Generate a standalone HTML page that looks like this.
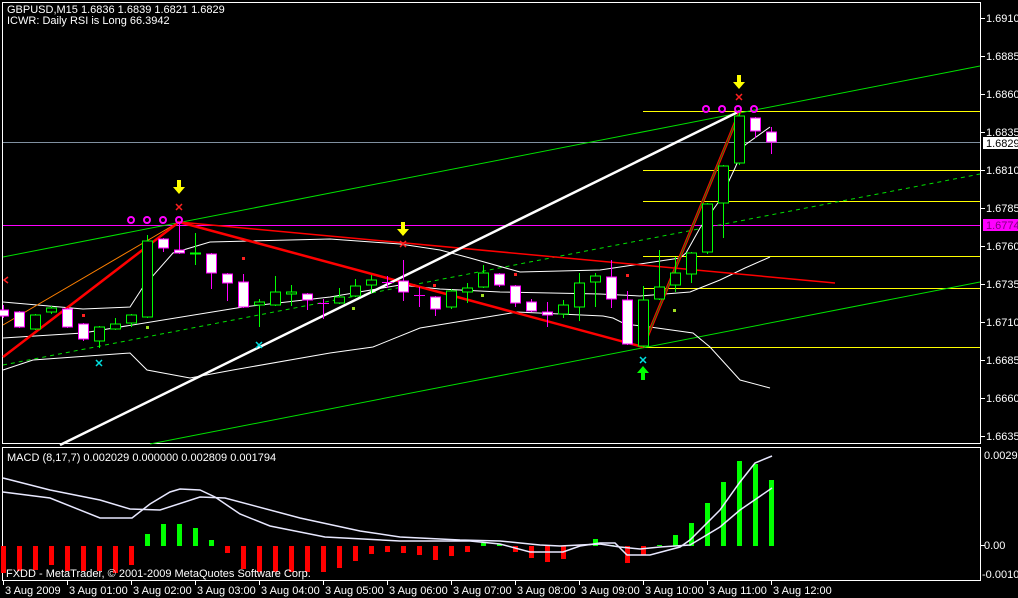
<!DOCTYPE html>
<html><head><meta charset="utf-8"><style>
html,body{margin:0;padding:0;background:#000;overflow:hidden}
svg{display:block}
text{font-family:"Liberation Sans",sans-serif;font-size:11px;fill:#fff}
</style></head><body>
<svg width="1018" height="598" viewBox="0 0 1018 598" xmlns="http://www.w3.org/2000/svg">
<rect width="1018" height="598" fill="#000"/>
<rect x="2.5" y="2.5" width="978" height="441" fill="none" stroke="#fff" stroke-width="1"/>
<rect x="2.5" y="447.5" width="978" height="133" fill="none" stroke="#fff" stroke-width="1"/>
<g stroke="#fff" stroke-width="1">
<line x1="981" y1="18.5" x2="985" y2="18.5"/><line x1="981" y1="56.5" x2="985" y2="56.5"/><line x1="981" y1="94.5" x2="985" y2="94.5"/><line x1="981" y1="132.5" x2="985" y2="132.5"/><line x1="981" y1="170.5" x2="985" y2="170.5"/><line x1="981" y1="208.5" x2="985" y2="208.5"/><line x1="981" y1="246.5" x2="985" y2="246.5"/><line x1="981" y1="284.5" x2="985" y2="284.5"/><line x1="981" y1="322.5" x2="985" y2="322.5"/><line x1="981" y1="360.5" x2="985" y2="360.5"/><line x1="981" y1="398.5" x2="985" y2="398.5"/><line x1="981" y1="436.5" x2="985" y2="436.5"/>
<line x1="981" y1="545.5" x2="985" y2="545.5"/>
<line x1="3.5" y1="581" x2="3.5" y2="585"/><line x1="67.5" y1="581" x2="67.5" y2="585"/><line x1="131.5" y1="581" x2="131.5" y2="585"/><line x1="195.5" y1="581" x2="195.5" y2="585"/><line x1="259.5" y1="581" x2="259.5" y2="585"/><line x1="323.5" y1="581" x2="323.5" y2="585"/><line x1="387.5" y1="581" x2="387.5" y2="585"/><line x1="451.5" y1="581" x2="451.5" y2="585"/><line x1="515.5" y1="581" x2="515.5" y2="585"/><line x1="579.5" y1="581" x2="579.5" y2="585"/><line x1="643.5" y1="581" x2="643.5" y2="585"/><line x1="707.5" y1="581" x2="707.5" y2="585"/><line x1="771.5" y1="581" x2="771.5" y2="585"/>
</g>
<g>
<text x="986" y="22">1.6910</text><text x="986" y="60">1.6885</text><text x="986" y="98">1.6860</text><text x="986" y="136">1.6835</text><text x="986" y="174">1.6810</text><text x="986" y="212">1.6785</text><text x="986" y="250">1.6760</text><text x="986" y="288">1.6735</text><text x="986" y="326">1.6710</text><text x="986" y="364">1.6685</text><text x="986" y="402">1.6660</text><text x="986" y="440">1.6635</text>
<text x="984" y="459">0.00299</text><text x="984" y="549">0.00</text><text x="982" y="578">-0.00107</text>
</g>
<rect x="983" y="137" width="35" height="12" fill="#fff"/><text x="986" y="147" style="fill:#000">1.6829</text>
<rect x="983" y="219" width="35" height="12" fill="#ff00ff"/><text x="986" y="229" style="fill:#800080">1.6774</text>
<g>
<text x="5" y="594">3 Aug 2009</text><text x="69" y="594">3 Aug 01:00</text><text x="133" y="594">3 Aug 02:00</text><text x="197" y="594">3 Aug 03:00</text><text x="261" y="594">3 Aug 04:00</text><text x="325" y="594">3 Aug 05:00</text><text x="389" y="594">3 Aug 06:00</text><text x="453" y="594">3 Aug 07:00</text><text x="517" y="594">3 Aug 08:00</text><text x="581" y="594">3 Aug 09:00</text><text x="645" y="594">3 Aug 10:00</text><text x="709" y="594">3 Aug 11:00</text><text x="773" y="594">3 Aug 12:00</text>
</g>
<line x1="3" y1="225.5" x2="980" y2="225.5" stroke="#ff00ff"/>
<line x1="3" y1="142.5" x2="980" y2="142.5" stroke="#8090a0"/>
<g stroke="#ffff00" stroke-width="1">
<line x1="643" y1="111.5" x2="980" y2="111.5"/><line x1="643" y1="170.5" x2="980" y2="170.5"/><line x1="643" y1="201.5" x2="980" y2="201.5"/><line x1="643" y1="256.5" x2="980" y2="256.5"/><line x1="643" y1="288.5" x2="980" y2="288.5"/><line x1="643" y1="347.5" x2="980" y2="347.5"/>
</g>
<line x1="3" y1="257" x2="980" y2="66" stroke="#00e000"/>
<line x1="150" y1="444" x2="980" y2="282" stroke="#00e000"/>
<line x1="3" y1="365" x2="980" y2="174" stroke="#00e000" stroke-dasharray="4,4"/>
<g fill="none" stroke="#fff" stroke-width="1">
<polyline points="3,302 83,309 130,307 143,287 173,253 210,242 330,239 400,244 440,250 470,258 520,272 600,270 640,264 680,258 686,253 700,228 720,200 735,168 745,145 770,127"/>
<polyline points="3,338 83,333 243,307 330,297 400,285 440,289 500,292 600,294 640,296 690,292 720,280 745,268 770,257"/>
<polyline points="3,370 33,360 130,353 147,370 190,378 233,370 330,353 373,347 420,328 487,317 517,312 603,316 613,318 625,324 650,327 693,333 710,347 740,380 770,388"/>
</g>
<line x1="3" y1="325" x2="179" y2="222" stroke="#ff8000"/>
<line x1="179" y1="222" x2="835" y2="283" stroke="#ff0000" stroke-width="1.5"/>
<polyline points="3,357 179,222 643,347" fill="none" stroke="#ff0000" stroke-width="2.5"/>
<line x1="60" y1="445" x2="740" y2="111" stroke="#fff" stroke-width="2.5"/>
<line x1="643" y1="347" x2="740" y2="111" stroke="#ff0000" stroke-width="3"/>
<line x1="643" y1="347" x2="740" y2="111" stroke="#008000" stroke-width="1"/>
<g stroke-width="1">
<g stroke="#ff00ff" fill="#fff">
<line x1="3.5" y1="305" x2="3.5" y2="318"/><rect x="-1.5" y="310" width="10" height="6"/>
<line x1="19.5" y1="311" x2="19.5" y2="328"/><rect x="14.5" y="312" width="10" height="15"/>
<line x1="67.5" y1="308" x2="67.5" y2="328"/><rect x="62.5" y="309" width="10" height="18"/>
<line x1="83.5" y1="323" x2="83.5" y2="341"/><rect x="78.5" y="324" width="10" height="15"/>
<line x1="163.5" y1="238" x2="163.5" y2="252"/><rect x="158.5" y="239" width="10" height="9"/>
<line x1="179.5" y1="222" x2="179.5" y2="254"/><rect x="174.5" y="250" width="10" height="3"/>
<line x1="211.5" y1="253" x2="211.5" y2="289"/><rect x="206.5" y="254" width="10" height="19"/>
<line x1="227.5" y1="273" x2="227.5" y2="301"/><rect x="222.5" y="274" width="10" height="9"/>
<line x1="243.5" y1="274" x2="243.5" y2="308"/><rect x="238.5" y="282" width="10" height="25"/>
<line x1="307.5" y1="293" x2="307.5" y2="310"/><rect x="302.5" y="294" width="10" height="6"/>
<line x1="323.5" y1="299" x2="323.5" y2="319"/><line x1="318" y1="303.5" x2="329" y2="303.5"/>
<line x1="387.5" y1="276" x2="387.5" y2="288"/><line x1="382" y1="282.5" x2="393" y2="282.5"/>
<line x1="403.5" y1="260" x2="403.5" y2="301"/><rect x="398.5" y="281" width="10" height="11"/>
<line x1="419.5" y1="287" x2="419.5" y2="307"/><line x1="414" y1="295.5" x2="425" y2="295.5"/>
<line x1="435.5" y1="296" x2="435.5" y2="316"/><rect x="430.5" y="297" width="10" height="12"/>
<line x1="499.5" y1="273" x2="499.5" y2="287"/><rect x="494.5" y="274" width="10" height="11"/>
<line x1="515.5" y1="285" x2="515.5" y2="307"/><rect x="510.5" y="286" width="10" height="17"/>
<line x1="531.5" y1="299" x2="531.5" y2="312"/><rect x="526.5" y="302" width="10" height="9"/>
<line x1="547.5" y1="302" x2="547.5" y2="327"/><rect x="542.5" y="312" width="10" height="3"/>
<line x1="611.5" y1="260" x2="611.5" y2="308"/><rect x="606.5" y="277" width="10" height="22"/>
<line x1="627.5" y1="291" x2="627.5" y2="345"/><rect x="622.5" y="300" width="10" height="44"/>
<line x1="755.5" y1="117" x2="755.5" y2="138"/><rect x="750.5" y="118" width="10" height="13"/>
<line x1="771.5" y1="127" x2="771.5" y2="154"/><rect x="766.5" y="132" width="10" height="10"/>
</g>
<g stroke="#00ff00" fill="#000">
<line x1="35.5" y1="314" x2="35.5" y2="330"/><rect x="30.5" y="315" width="10" height="14"/>
<line x1="51.5" y1="306" x2="51.5" y2="314"/><rect x="46.5" y="308" width="10" height="4"/>
<line x1="99.5" y1="326" x2="99.5" y2="348"/><rect x="94.5" y="327" width="10" height="14"/>
<line x1="115.5" y1="318" x2="115.5" y2="330"/><rect x="110.5" y="324" width="10" height="5"/>
<line x1="131.5" y1="314" x2="131.5" y2="327"/><rect x="126.5" y="315" width="10" height="8"/>
<line x1="147.5" y1="235" x2="147.5" y2="318"/><rect x="142.5" y="241" width="10" height="76"/>
<line x1="195.5" y1="233" x2="195.5" y2="265"/><line x1="190" y1="253.5" x2="201" y2="253.5" stroke-width="2"/>
<line x1="259.5" y1="299" x2="259.5" y2="327"/><rect x="254.5" y="302" width="10" height="3"/>
<line x1="275.5" y1="276" x2="275.5" y2="306"/><rect x="270.5" y="292" width="10" height="13"/>
<line x1="291.5" y1="285" x2="291.5" y2="306"/><rect x="286.5" y="292" width="10" height="2"/>
<line x1="339.5" y1="288" x2="339.5" y2="304"/><rect x="334.5" y="297" width="10" height="6"/>
<line x1="355.5" y1="279" x2="355.5" y2="297"/><rect x="350.5" y="286" width="10" height="10"/>
<line x1="371.5" y1="275" x2="371.5" y2="293"/><rect x="366.5" y="280" width="10" height="5"/>
<line x1="451.5" y1="289" x2="451.5" y2="309"/><rect x="446.5" y="291" width="10" height="16"/>
<line x1="467.5" y1="283" x2="467.5" y2="303"/><rect x="462.5" y="288" width="10" height="4"/>
<line x1="483.5" y1="265" x2="483.5" y2="288"/><rect x="478.5" y="273" width="10" height="14"/>
<line x1="563.5" y1="300" x2="563.5" y2="318"/><rect x="558.5" y="305" width="10" height="9"/>
<line x1="579.5" y1="273" x2="579.5" y2="321"/><rect x="574.5" y="283" width="10" height="24"/>
<line x1="595.5" y1="273" x2="595.5" y2="307"/><rect x="590.5" y="276" width="10" height="6"/>
<line x1="643.5" y1="286" x2="643.5" y2="347"/><rect x="638.5" y="300" width="10" height="46"/>
<line x1="659.5" y1="250" x2="659.5" y2="300"/><rect x="654.5" y="287" width="10" height="12"/>
<line x1="675.5" y1="257" x2="675.5" y2="292"/><rect x="670.5" y="273" width="10" height="12"/>
<line x1="691.5" y1="252" x2="691.5" y2="283"/><rect x="686.5" y="253" width="10" height="21"/>
<line x1="707.5" y1="203" x2="707.5" y2="254"/><rect x="702.5" y="204" width="10" height="48"/>
<line x1="723.5" y1="165" x2="723.5" y2="238"/><rect x="718.5" y="166" width="10" height="37"/>
<line x1="739.5" y1="110" x2="739.5" y2="165"/><rect x="734.5" y="116" width="10" height="47"/>
</g>
</g>
<g fill="none" stroke="#ff00ff" stroke-width="2">
<circle cx="131" cy="220" r="3"/><circle cx="147" cy="220" r="3"/><circle cx="163" cy="220" r="3"/><circle cx="179" cy="220" r="3"/>
<circle cx="706" cy="109" r="3"/><circle cx="722" cy="109" r="3"/><circle cx="738" cy="109" r="3"/><circle cx="754" cy="109" r="3"/>
</g>
<g fill="#ffff00">
<path d="M177,180h4v7h4l-6,7l-6,-7h4z"/><path d="M401,222h4v7h4l-6,7l-6,-7h4z"/><path d="M737,75h4v7h4l-6,7l-6,-7h4z"/>
</g>
<path d="M641,380h4v-7h4l-6,-7l-6,7h4z" fill="#00ff00"/>
<g stroke="#ff2020" stroke-width="1.5">
<path d="M176,204l6,6M182,204l-6,6"/><path d="M400,241l6,6M406,241l-6,6"/><path d="M736,94l6,6M742,94l-6,6"/><path d="M8,277l-4,3l4,3"/>
</g>
<g stroke="#00e0e0" stroke-width="1.5">
<path d="M96,360l6,6M102,360l-6,6"/><path d="M256,342l6,6M262,342l-6,6"/><path d="M640,357l6,6M646,357l-6,6"/>
</g>
<g fill="#ff2020"><rect x="82" y="314" width="3" height="3"/><rect x="242" y="257" width="3" height="3"/><rect x="514" y="273" width="3" height="3"/><rect x="626" y="274" width="3" height="3"/><rect x="433" y="284" width="3" height="3"/></g>
<g fill="#a0e020"><rect x="146" y="326" width="3" height="3"/><rect x="352" y="307" width="3" height="3"/><rect x="481" y="294" width="3" height="3"/><rect x="673" y="309" width="3" height="3"/></g>
<text x="7" y="13">GBPUSD,M15  1.6836 1.6839 1.6821 1.6829</text>
<text x="7" y="24">ICWR: Daily RSI is Long 66.3942</text>
<g>
<rect x="1" y="546" width="5" height="27" fill="#ff0000"/><rect x="17" y="546" width="5" height="25" fill="#ff0000"/><rect x="33" y="546" width="5" height="24" fill="#ff0000"/><rect x="49" y="546" width="5" height="19" fill="#ff0000"/><rect x="65" y="546" width="5" height="25" fill="#ff0000"/><rect x="81" y="546" width="5" height="25" fill="#ff0000"/><rect x="97" y="546" width="5" height="25" fill="#ff0000"/><rect x="113" y="546" width="5" height="27" fill="#ff0000"/><rect x="129" y="546" width="5" height="19" fill="#ff0000"/>
<rect x="145" y="534" width="5" height="12" fill="#00ff00"/><rect x="161" y="524" width="5" height="22" fill="#00ff00"/><rect x="177" y="524" width="5" height="22" fill="#00ff00"/><rect x="193" y="528" width="5" height="18" fill="#00ff00"/><rect x="209" y="540" width="5" height="6" fill="#00ff00"/>
<rect x="225" y="546" width="5" height="7" fill="#ff0000"/><rect x="241" y="546" width="5" height="23" fill="#ff0000"/><rect x="257" y="546" width="5" height="26" fill="#ff0000"/><rect x="273" y="546" width="5" height="26" fill="#ff0000"/><rect x="289" y="546" width="5" height="26" fill="#ff0000"/><rect x="305" y="546" width="5" height="26" fill="#ff0000"/><rect x="321" y="546" width="5" height="26" fill="#ff0000"/><rect x="337" y="546" width="5" height="22" fill="#ff0000"/><rect x="353" y="546" width="5" height="15" fill="#ff0000"/><rect x="369" y="546" width="5" height="8" fill="#ff0000"/><rect x="385" y="546" width="5" height="6" fill="#ff0000"/><rect x="401" y="546" width="5" height="7" fill="#ff0000"/><rect x="417" y="546" width="5" height="9" fill="#ff0000"/><rect x="433" y="546" width="5" height="14" fill="#ff0000"/><rect x="449" y="546" width="5" height="10" fill="#ff0000"/><rect x="465" y="546" width="5" height="6" fill="#ff0000"/>
<rect x="481" y="543" width="5" height="3" fill="#00ff00"/><rect x="497" y="544" width="5" height="2" fill="#00ff00"/>
<rect x="513" y="546" width="5" height="6" fill="#ff0000"/><rect x="529" y="546" width="5" height="12" fill="#ff0000"/><rect x="545" y="546" width="5" height="16" fill="#ff0000"/><rect x="561" y="546" width="5" height="13" fill="#ff0000"/><rect x="577" y="545" width="5" height="1" fill="#ff0000"/>
<rect x="593" y="539" width="5" height="7" fill="#00ff00"/><rect x="609" y="545" width="5" height="1" fill="#00ff00"/>
<rect x="625" y="546" width="5" height="17" fill="#ff0000"/><rect x="641" y="546" width="5" height="9" fill="#ff0000"/>
<rect x="657" y="545" width="5" height="1" fill="#00ff00"/><rect x="673" y="535" width="5" height="11" fill="#00ff00"/><rect x="689" y="523" width="5" height="23" fill="#00ff00"/><rect x="705" y="503" width="5" height="43" fill="#00ff00"/><rect x="721" y="482" width="5" height="64" fill="#00ff00"/><rect x="737" y="461" width="5" height="85" fill="#00ff00"/><rect x="753" y="464" width="5" height="82" fill="#00ff00"/><rect x="769" y="480" width="5" height="66" fill="#00ff00"/>
</g>
<g fill="none" stroke="#e8e8ff" stroke-width="1.5">
<polyline points="3,478 50,490 100,500 130,509 160,510 200,497 225,498 300,518 360,531 400,537 460,540 500,541 540,545 560,546 600,544 620,547 640,549 660,547 690,545 720,527 740,510 772,488"/>
<polyline points="3,492 50,498 100,518 132,518 150,504 170,492 180,489 200,490 215,497 240,514 270,526 325,537 400,541 470,541 500,544 530,552 563,552 580,546 600,543 615,543 627,555 650,555 680,547 690,540 720,510 740,482 755,463 772,456"/>
</g>
<text x="7" y="461">MACD  (8,17,7) 0.002029 0.000000 0.002809 0.001794</text>
<text x="6" y="577">FXDD - MetaTrader, © 2001-2009 MetaQuotes Software Corp.</text>
</svg>
</body></html>
